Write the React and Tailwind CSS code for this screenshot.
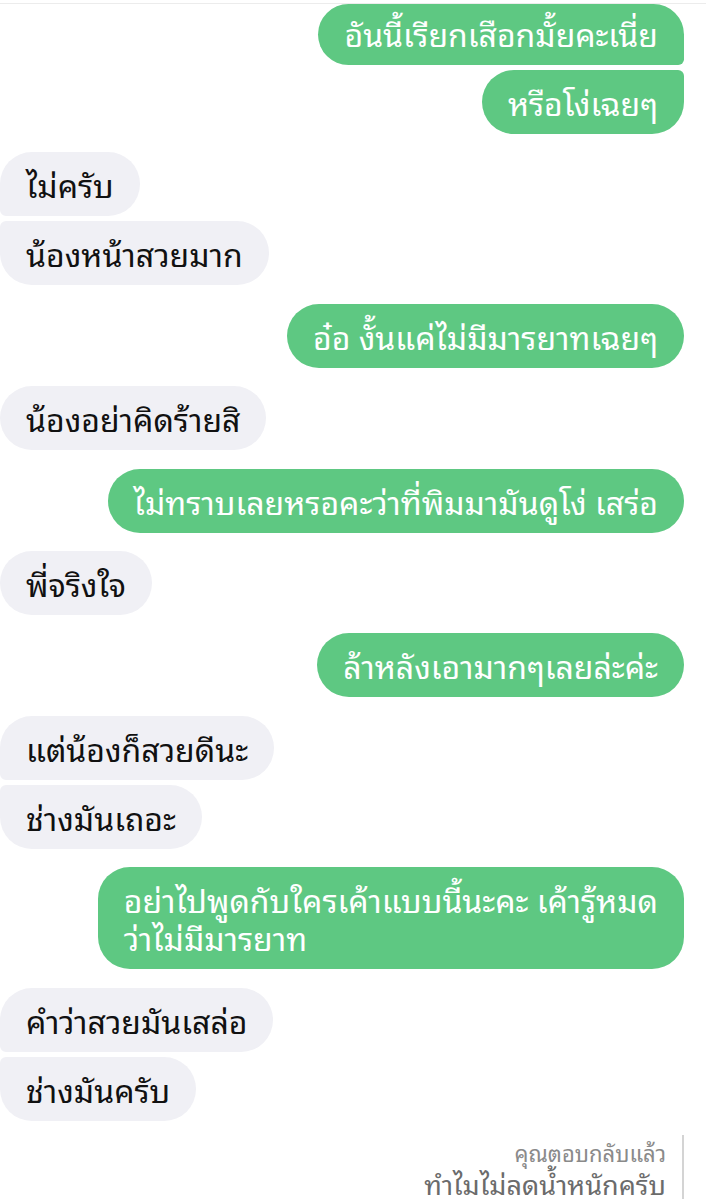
import React from "react";

const messages = [
  { side: "me", group: ["อันนี้เรียกเสือกมั้ยคะเนี่ย", "หรือโง่เฉยๆ"] },
  { side: "them", group: ["ไม่ครับ", "น้องหน้าสวยมาก"] },
  { side: "me", group: ["อ๋อ งั้นแค่ไม่มีมารยาทเฉยๆ"] },
  { side: "them", group: ["น้องอย่าคิดร้ายสิ"] },
  { side: "me", group: ["ไม่ทราบเลยหรอคะว่าที่พิมมามันดูโง่ เสร่อ"] },
  { side: "them", group: ["พี่จริงใจ"] },
  { side: "me", group: ["ล้าหลังเอามากๆเลยล่ะค่ะ"] },
  { side: "them", group: ["แต่น้องก็สวยดีนะ", "ช่างมันเถอะ"] },
  { side: "me", group: [["อย่าไปพูดกับใครเค้าแบบนี้นะคะ เค้ารู้หมด", "ว่าไม่มีมารยาท"]] },
  { side: "them", group: ["คำว่าสวยมันเสล่อ", "ช่างมันครับ"] },
];

const font = {
  fontFamily:
    '"Noto Sans Thai Looped", "Noto Looped Thai", Loma, Garuda, Sarabun, "Noto Sans Thai", "Noto Sans", sans-serif',
};

function cornerClass(side, i, n) {
  // grouped bubbles get tight corners where they touch
  const first = i === 0;
  const last = i === n - 1;
  if (side === "me") {
    if (n === 1) return "rounded-[32px]";
    if (first) return "rounded-l-[32px] rounded-tr-[32px] rounded-br-[6px]";
    if (last) return "rounded-l-[32px] rounded-tr-[6px] rounded-br-[32px]";
    return "rounded-l-[32px] rounded-r-[6px]";
  }
  if (n === 1) return "rounded-[32px]";
  if (first) return "rounded-r-[32px] rounded-tl-[32px] rounded-bl-[6px]";
  if (last) return "rounded-r-[32px] rounded-tl-[6px] rounded-bl-[32px]";
  return "rounded-r-[32px] rounded-l-[6px]";
}

const Bubble = ({ side, text, corners, top }) => {
  const lines = Array.isArray(text) ? text : [text];
  const tone =
    side === "me"
      ? "bg-[#5ec882] text-white self-end"
      : "bg-[#f0f0f5] text-[#111111] self-start";
  const pad = top ? "pt-[10px] pb-[13px]" : "py-[13px]";
  return (
    <div className={`${tone} ${corners} ${pad} px-[26px] text-[32px] leading-[38px]`}>
      {lines.map((l, k) => (
        <div key={k} className="whitespace-nowrap">
          {l}
        </div>
      ))}
    </div>
  );
};

export default function App() {
  return (
    <div className="w-[706px] h-[1199px] overflow-hidden bg-white" style={font}>
      <div className="h-[3px]" />
      <div className="h-px bg-[#ececec]" />
      <div className="flex flex-col gap-[18.4px] pr-[22px]">
        {messages.map((m, idx) => (
          <div key={idx} className="flex flex-col gap-[5px]">
            {m.group.map((t, i) => (
              <Bubble
                key={i}
                side={m.side}
                text={t}
                top={idx === 0 && i === 0}
                corners={cornerClass(m.side, i, m.group.length)}
              />
            ))}
          </div>
        ))}
        <div className="flex justify-end items-stretch gap-[16px] -mt-[4px]">
          <div className="flex flex-col items-end pt-[4px]">
            <div className="text-[22px] leading-[26px] text-[#8a8a8a]">คุณตอบกลับแล้ว</div>
            <div className="text-[27px] leading-[36px] text-[#6b6b6b]">ทำไมไม่ลดน้ำหนักครับ</div>
          </div>
          <div className="w-[2px] bg-[#d4d4d4] h-[80px]" />
        </div>
      </div>
    </div>
  );
}
